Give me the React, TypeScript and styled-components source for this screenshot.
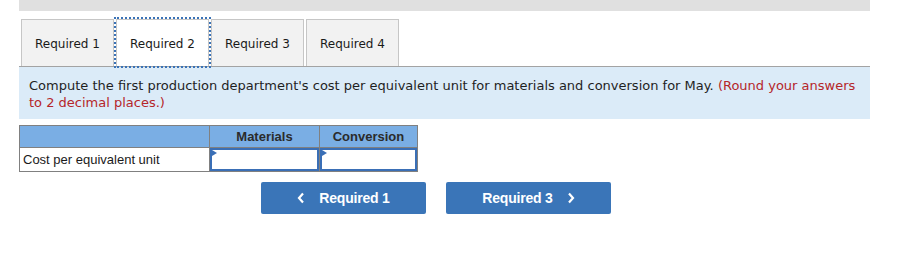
import React from "react";
import styled, { createGlobalStyle } from "styled-components";

const GlobalStyle = createGlobalStyle`
	body {
		margin: 0;
		background: #ffffff;
		font-family: "DejaVu Sans", Verdana, sans-serif;
	}
`;

const Page = styled.div`
	width: 851px;
	padding-left: 19px;
`;

const TopBar = styled.div`
	height: 11px;
	background: #e0e0e0;
`;

const TabRow = styled.div`
	display: flex;
	gap: 2px;
	margin: 8px 0 0 2px;
	height: 47px;
`;

const Tab = styled.button<{ $active?: boolean }>`
	width: 93px;
	height: 47px;
	box-sizing: border-box;
	border: 1px solid #c6c6c6;
	border-bottom: none;
	background: ${(p) => (p.$active ? "#ffffff" : "#f2f2f2")};
	font-family: "DejaVu Sans", Verdana, sans-serif;
	font-size: 12px;
	color: #1a1a1a;
	padding: 2px 0 0;
	outline: ${(p) => (p.$active ? "2px dotted #3a72b6" : "none")};
	outline-offset: 0;
	cursor: pointer;
`;

const Prompt = styled.div`
	border-top: 1px solid #a3a3a3;
	background: #dbebf8;
	padding: 10px 10px 8px;
	font-size: 13px;
	line-height: 17px;
	color: #1f1f1f;
`;

const Hint = styled.span`
	color: #b5262a;
`;

const Grid = styled.table`
	margin-top: 6px;
	border-collapse: collapse;
	font-family: "Liberation Sans", Arial, sans-serif;
	font-size: 13px;
`;

const HeadCell = styled.th<{ $w: number }>`
	width: ${(p) => p.$w}px;
	height: 22px;
	padding: 0;
	background: #7aaee4;
	border: 1px solid #808080;
	color: #2b2b2b;
	font-weight: bold;
	text-align: center;
	box-sizing: border-box;
`;

const LabelCell = styled.td`
	height: 23px;
	padding: 0 0 0 3px;
	border: 1px solid #808080;
	color: #1a1a1a;
	white-space: nowrap;
`;

const InputCell = styled.td`
	position: relative;
	padding: 0;
	border: 1px solid #808080;
	height: 23px;
`;

const Field = styled.input`
	display: block;
	width: 100%;
	height: 23px;
	box-sizing: border-box;
	border: 2px solid #3a6fb6;
	margin: 0;
	padding: 0 4px;
	font: inherit;
	background: #ffffff;
	outline: none;
`;

const Marker = styled.span`
	position: absolute;
	top: 2px;
	left: 2px;
	width: 0;
	height: 0;
	border-top: 3px solid transparent;
	border-bottom: 3px solid transparent;
	border-left: 5px solid #3a6fb6;
`;

const Nav = styled.div`
	display: flex;
	gap: 20px;
	margin: 10px 0 0 242px;
`;

const NavButton = styled.button`
	width: 165px;
	height: 32px;
	display: flex;
	align-items: center;
	justify-content: center;
	gap: 14px;
	border: none;
	border-radius: 2px;
	background: #3a75b8;
	color: #ffffff;
	font-family: "Liberation Sans", Arial, sans-serif;
	font-size: 14px;
	font-weight: bold;
	letter-spacing: -0.2px;
	cursor: pointer;
`;

const Chevron = ({ dir }: { dir: "left" | "right" }) => (
	<svg width="8" height="12" viewBox="0 0 8 12">
		<path
			d={dir === "left" ? "M6 1.5 L2 6 L6 10.5" : "M2 1.5 L6 6 L2 10.5"}
			fill="none"
			stroke="#ffffff"
			strokeWidth="2.2"
		/>
	</svg>
);

const tabs = ["Required 1", "Required 2", "Required 3", "Required 4"];

const App = () => (
	<Page>
		<GlobalStyle />
		<TopBar />
		<TabRow>
			{tabs.map((t) => (
				<Tab key={t} $active={t === "Required 2"}>
					{t}
				</Tab>
			))}
		</TabRow>
		<Prompt>
			Compute the first production department's cost per equivalent unit for materials and
			conversion for May. <Hint>(Round your answers to 2 decimal places.)</Hint>
		</Prompt>
		<Grid>
			<thead>
				<tr>
					<HeadCell $w={190} />
					<HeadCell $w={110}>Materials</HeadCell>
					<HeadCell $w={98}>Conversion</HeadCell>
				</tr>
			</thead>
			<tbody>
				<tr>
					<LabelCell>Cost per equivalent unit</LabelCell>
					<InputCell>
						<Field />
						<Marker />
					</InputCell>
					<InputCell>
						<Field />
						<Marker />
					</InputCell>
				</tr>
			</tbody>
		</Grid>
		<Nav>
			<NavButton>
				<Chevron dir="left" />
				Required 1
			</NavButton>
			<NavButton>
				Required 3
				<Chevron dir="right" />
			</NavButton>
		</Nav>
	</Page>
);

export default App;
